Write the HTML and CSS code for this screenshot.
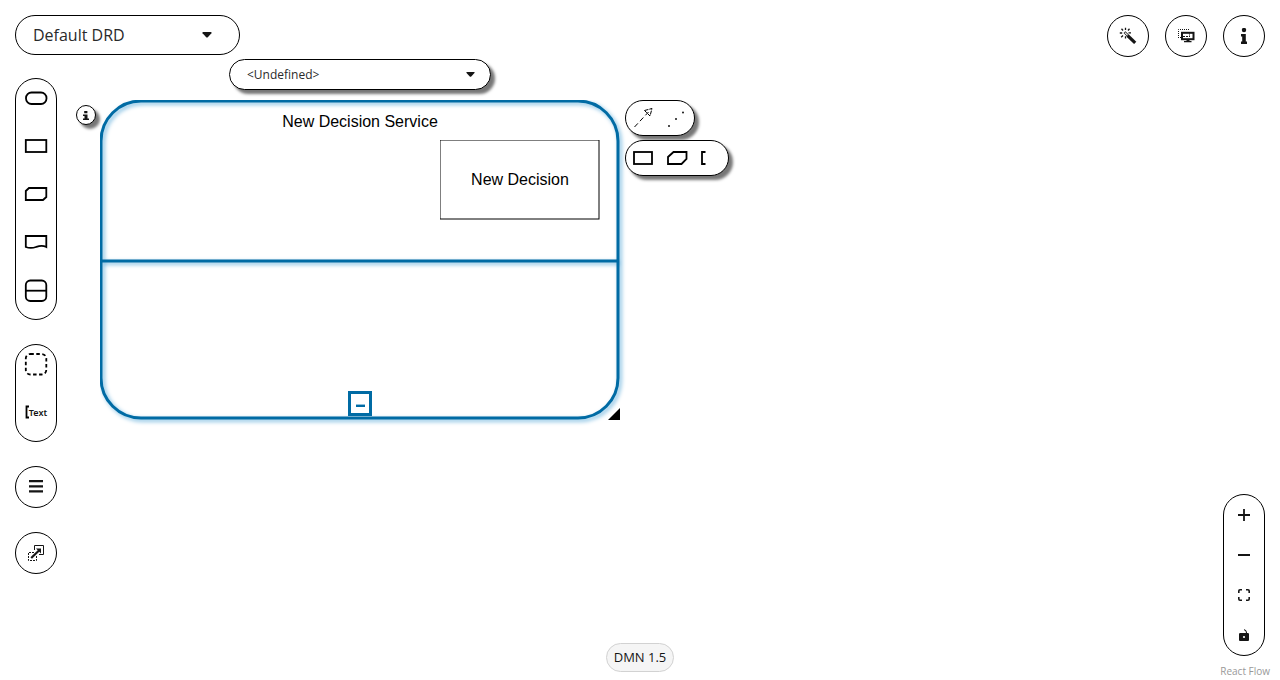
FILE: index.html
```html
<!DOCTYPE html>
<html lang="en">
<head>
<meta charset="utf-8">
<meta name="viewport" content="width=device-width, initial-scale=1">
<title>DMN Editor</title>
<link rel="stylesheet" href="styles.css">
</head>
<body>
<div class="editor">
  <main class="canvas">
    <section class="node service" aria-label="New Decision Service">
      <svg class="shape service-shape" width="520" height="320" viewBox="0 0 520 320">
        <g class="service-lines">
          <rect x="1" y="1" width="517" height="317" rx="40"/>
          <path d="M1 161H518"/>
        </g>
      </svg>
      <span class="node-name service-name">New Decision Service</span>
      <button class="collapse" aria-label="Collapse"><span class="collapse-mark"></span></button>
      <button class="pill node-info" aria-label="Node information">
        <svg width="6" height="9" viewBox="0 0 6 12" preserveAspectRatio="none"><path d="M1.200 0h3.200v3h-3.200zM0 4.500h4.500v5.500H6v2H0v-2h1.500V6.500H0z"/></svg>
      </button>
      <label class="dropdown type-select pill">
        <select aria-label="Data type"><option>&lt;Undefined&gt;</option></select>
        <svg class="caret" width="9" height="5" viewBox="0 0 10 6" preserveAspectRatio="none"><path d="M1 0h8q1 .4.4 1.2L5.8 5.4Q5 6.200 4.200 5.400L.6 1.200Q0 .4 1 0z"/></svg>
      </label>
      <div class="node-tools">
        <div class="pill tool-row">
          <button class="tool" aria-label="Information requirement">
            <svg class="thin" width="36" height="34" viewBox="0 0 36 34"><path d="M8.500 26L22.500 11" stroke-dasharray="5 3"/><path d="M18.500 9.500L26 7.500L24 15L18.500 9.500" stroke-dasharray="4 1"/></svg>
          </button>
          <button class="tool" aria-label="Association">
            <svg width="32" height="34" viewBox="0 0 32 34"><circle cx="7" cy="25" r="1"/><circle cx="14" cy="18" r="1"/><circle cx="21" cy="11.500" r="1"/></svg>
          </button>
        </div>
        <div class="pill tool-row">
          <button class="tool" aria-label="Add decision">
            <svg class="line" width="34" height="34" viewBox="0 0 34 34"><rect x="8" y="11" width="18" height="12"/></svg>
          </button>
          <button class="tool" aria-label="Add business knowledge model">
            <svg class="line" width="34" height="34" viewBox="0 0 34 34"><path d="M13.500 11H26.500v7l-5 5H8v-7z"/></svg>
          </button>
          <button class="tool" aria-label="Add text annotation">
            <svg class="line" width="34" height="34" viewBox="0 0 34 34"><path d="M11.500 11H8V23H11.500"/></svg>
          </button>
        </div>
      </div>
      <svg class="resize" width="12" height="12" viewBox="0 0 12 12"><path d="M12 0V12H0z"/></svg>
    </section>
    <section class="node decision" aria-label="New Decision">
      <svg class="shape" width="160" height="80" viewBox="0 0 160 80"><rect class="decision-outline" x="0" y="0" width="159" height="79"/></svg>
      <span class="node-name">New Decision</span>
    </section>
  </main>

  <header class="topbar">
    <label class="dropdown drd-select pill">
      <select aria-label="DRD"><option>Default DRD</option></select>
      <svg class="caret" width="10" height="6" viewBox="0 0 10 6" preserveAspectRatio="none"><path d="M1 0h8q1 .4.4 1.2L5.800 5.200Q5 5.800 4.200 5.200L.6 1.200Q0 .4 1 0z"/></svg>
    </label>
    <div class="actions">
      <button class="pill round" aria-label="Autolayout">
        <svg width="18" height="18" viewBox="0 0 18 18"><path d="M8.500 8.500L16.200 15.800" stroke="#151515" stroke-width="3.200"/><path d="M5.500 5.200L8.700 8.400" stroke="#151515" stroke-width="2.600"/><path d="M5.900 5.600L8.500 8.200" stroke="#fff" stroke-width="1.100"/><path d="M6.500.8V3M2.500 1.800L4 3.500M.8 6H3.200M2.200 10.200L4 8.500M6.500 9.200V11.500M10.500 1.800L9 3.500M9.500 5.800H12" stroke="#151515" stroke-width="1.300"/></svg>
      </button>
      <button class="pill round" aria-label="Overlays">
        <svg width="18" height="16" viewBox="0 0 18 16"><path d="M1.500 10V1.500H13" fill="none" stroke="#151515" stroke-dasharray="1 1"/><path d="M1 9.500H4" stroke="#151515" stroke-dasharray="1 1"/><rect x="5" y="4.800" width="11.500" height="6.400" fill="none" stroke="#151515" stroke-width="2"/><path d="M6 8.500H13" fill="none" stroke="#151515" stroke-dasharray="2 1"/><path d="M12.500 5.500V8" fill="none" stroke="#151515" stroke-dasharray="1 1"/><path d="M9.500 11.500h3v1.500h2v1.200H7V13h2.500z"/></svg>
      </button>
      <button class="pill round" aria-label="Properties">
        <svg width="6" height="16" viewBox="0 0 6 16"><circle cx="3" cy="2" r="2.200"/><path d="M0 6h4.800v7.500H6V16H0v-2.500h1.200V8.500H0z"/></svg>
      </button>
    </div>
  </header>

  <div class="side">
    <nav class="palette" aria-label="Palette">
      <div class="pill stack">
        <button class="entry" aria-label="Input data"><svg class="line" width="24" height="24" viewBox="0 0 24 24"><rect x="2" y="6.500" width="20.500" height="11.500" rx="5.500"/></svg></button>
        <button class="entry" aria-label="Decision"><svg class="line" width="24" height="24" viewBox="0 0 24 24"><rect x="1.800" y="6" width="20.500" height="12"/></svg></button>
        <button class="entry" aria-label="Business knowledge model"><svg class="line" width="24" height="24" viewBox="0 0 24 24"><path d="M5 6H22.300V15L19 18H1.800V9z"/></svg></button>
        <button class="entry" aria-label="Knowledge source"><svg class="line" width="24" height="24" viewBox="0 0 24 24"><path d="M1.800 6H22.300V17C18 14.800 15.500 15.800 12 17C8 18.400 5 18.200 1.800 17z"/></svg></button>
        <button class="entry" aria-label="Decision service"><svg class="line" width="24" height="24" viewBox="0 0 24 24"><rect x="1.800" y="2.500" width="20.500" height="20.500" rx="4.500"/><path d="M1.800 12.700H22.300"/></svg></button>
      </div>
      <div class="pill stack">
        <button class="entry" aria-label="Group"><svg class="line" width="24" height="24" viewBox="0 0 24 24"><rect x="1.800" y="2" width="20.500" height="20.500" rx="4.500" stroke-dasharray="3.500 2.500"/></svg></button>
        <button class="entry text-entry" aria-label="Text annotation"><svg class="line" width="4" height="14" viewBox="0 0 4 14"><path d="M4 1.500H1.500V12.500H4"/></svg><span>Text</span></button>
      </div>
      <button class="pill round" aria-label="DRG nodes"><svg width="14" height="14" viewBox="0 0 14 14"><path d="M0 0h14v2.200H0zM0 5.200h14v2.200H0zM0 10.300h14v2.200H0z"/></svg></button>
      <button class="pill round" aria-label="External nodes">
        <svg width="16" height="16" viewBox="0 0 16 16"><path d="M6.500 5V.5H15.500V9.500H11" fill="none" stroke="#151515"/><path d="M6 7.500H.5V15.500H8.500V10" fill="none" stroke="#151515" stroke-dasharray="2 1"/><path d="M3.200 13L11 5.500" stroke="#151515" stroke-width="2.200"/><path d="M8 3.500H13V8.500z"/></svg>
      </button>
    </nav>

    <div class="controls pill">
      <button aria-label="Zoom in"><svg width="12" height="12" viewBox="0 0 12 12"><path d="M5.100 0h1.800v5.100H12v1.800H6.900V12H5.100V6.900H0V5.100h5.100z"/></svg></button>
      <button aria-label="Zoom out"><svg width="12" height="12" viewBox="0 0 12 12"><path d="M0 5h12v2H0z"/></svg></button>
      <button aria-label="Fit view"><svg width="12" height="12" viewBox="0 0 12 12"><path d="M.8 4V2Q.8.8 2 .8H4M8 .8h2q1.200 0 1.200 1.200v2M11.200 8v2q0 1.200-1.200 1.200H8M4 11.200H2Q.8 11.200.8 10V8" fill="none" stroke="#151515" stroke-width="1.600"/></svg></button>
      <button aria-label="Toggle interactivity"><svg width="10" height="12" viewBox="0 0 10 12"><path d="M1.200 4h7.600Q10 4 10 5v6q0 1-1 1H1q-1 0-1-1V5q0-1 1.200-1z"/><path d="M5 .7Q7.500.8 7.500 4" fill="none" stroke="#000"/><circle cx="5" cy="8" r="1.100" fill="#fff"/></svg></button>
    </div>
  </div>

  <footer class="bottom">
    <span class="version">DMN 1.5</span>
    <a class="attribution" href="#">React Flow</a>
  </footer>
</div>
</body>
</html>
```
FILE: styles.css
```css
* { box-sizing: border-box; }

body {
  margin: 0;
  font-family: "Open Sans", "Noto Sans", sans-serif;
  color: #151515;
  background: #fff;
}

button {
  display: flex;
  align-items: center;
  justify-content: center;
  padding: 0;
  border: 0;
  background: transparent;
  font: inherit;
  color: inherit;
  cursor: pointer;
}

svg { display: block; fill: #151515; }

.editor {
  position: relative;
  display: flex;
  flex-direction: column;
  min-height: 100vh;
}

.pill {
  border: 1px solid #000;
  border-radius: 40px;
  background: #fff;
}

.line { fill: none; stroke: #000; stroke-width: 1.8; }
.thin { fill: none; stroke: #000; stroke-width: 1; }

.round { width: 42px; height: 42px; }

/* Panels */
.topbar {
  display: flex;
  justify-content: space-between;
  align-items: flex-start;
  padding: 15px 15px 0;
}

.actions { display: flex; gap: 16px; }

.dropdown { display: grid; align-items: center; color: #2a2a2a; }

.dropdown select {
  grid-area: 1 / 1;
  width: 100%;
  height: 100%;
  padding: 0 17px;
  border: 0;
  border-radius: 40px;
  background: transparent;
  color: inherit;
  font: inherit;
  appearance: none;
}

.caret {
  grid-area: 1 / 1;
  justify-self: end;
  pointer-events: none;
}

.drd-select { width: 225px; height: 40px; font-size: 16px; }
.drd-select .caret { margin-right: 27px; }

.side {
  flex: 1;
  display: flex;
  justify-content: space-between;
  padding: 21px 15px 0;
}

.palette { display: flex; flex-direction: column; gap: 24px; }

.stack { width: 42px; }

.entry { width: 40px; height: 48px; padding-bottom: 10px; }

.text-entry {
  font-family: "Noto Sans", sans-serif;
  font-size: 9px;
  font-weight: 600;
}

.controls { align-self: flex-end; width: 42px; }
.controls button { width: 40px; height: 40px; }

.bottom {
  display: grid;
  grid-template: 24px / 1fr auto 1fr;
  align-items: end;
}

.version {
  grid-column: 2;
  margin-bottom: 8px;
  padding: 0 7px;
  border: 1px solid #d2d2d2;
  border-radius: 16px;
  background: #f5f5f5;
  font-size: 13px;
  line-height: 27px;
}

.attribution {
  justify-self: end;
  margin-right: 10px;
  color: #999;
  font-size: 10px;
  line-height: 18px;
  text-decoration: none;
}

/* Diagram */
.canvas { position: absolute; inset: 0; }
.topbar, .side, .bottom { z-index: 1; pointer-events: none; }
.topbar > *, .palette > *, .controls, .bottom > * { pointer-events: auto; }

.node { position: absolute; }
.shape { position: absolute; inset: 0; }

.node-name {
  position: relative;
  color: #000;
  font-family: "Liberation Sans", Arial, sans-serif;
  font-size: 16px;
  line-height: 18px;
}

.service {
  left: 100px;
  top: 100px;
  width: 520px;
  height: 320px;
  display: flex;
  flex-direction: column;
  align-items: center;
  justify-content: space-between;
  padding: 13px 0 4px;
}

.service-shape { overflow: visible; clip-path: inset(0 -8px -8px 0); }

.service-lines {
  fill: none;
  stroke: #006ba4;
  stroke-width: 3;
  filter: drop-shadow(2px 2px 2px #72b6de);
}

.collapse {
  position: relative;
  width: 24px;
  height: 25px;
  padding-top: 4px;
  border: 3px solid #006ba4;
  background: #fff;
}

.collapse-mark { width: 9px; height: 3px; border-top: 1px solid #8fc0dc; background: #006ba4; }

.node-info, .type-select, .tool-row { box-shadow: 4px 4px 3px #777; }

.node-info {
  position: absolute;
  left: -24px;
  top: 5px;
  width: 20px;
  height: 20px;
}

.type-select {
  position: absolute;
  left: 129px;
  top: -41px;
  width: 262px;
  height: 31px;
  font-size: 12px;
}
.type-select .caret { margin-right: 15px; }

.node-tools {
  position: absolute;
  left: 525px;
  top: 0;
  display: flex;
  flex-direction: column;
  align-items: flex-start;
  gap: 4px;
}

.tool-row { display: flex; }

.resize { position: absolute; right: 0; bottom: 0; fill: #000; }

.decision {
  left: 440px;
  top: 140px;
  width: 160px;
  height: 80px;
  display: flex;
  align-items: center;
  justify-content: center;
}

.decision-outline { fill: #fff; stroke: #000; stroke-width: 1; }
```
